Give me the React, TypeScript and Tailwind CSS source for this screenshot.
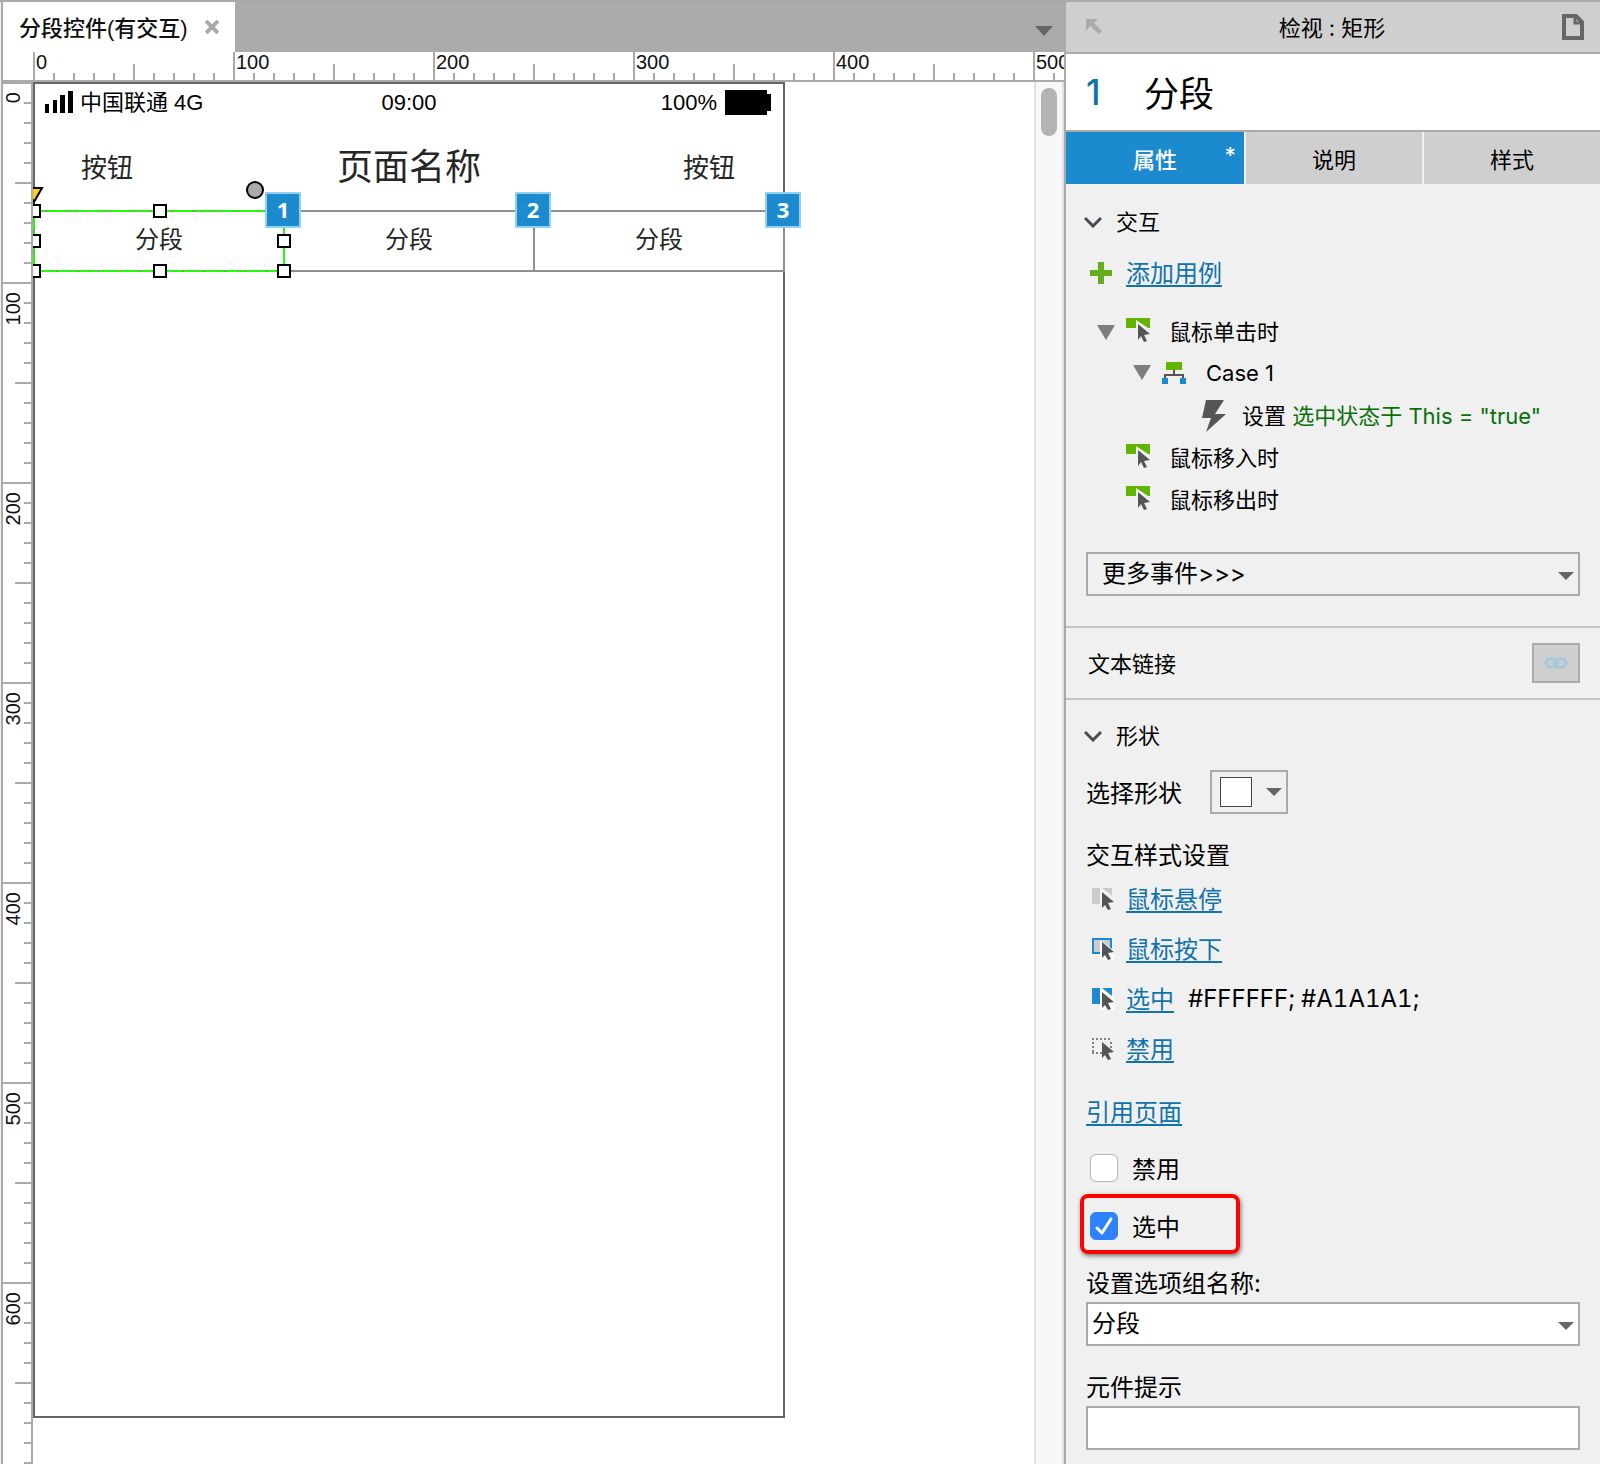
import React, { useState } from 'react';

const MAJORS_X = [0, 100, 200, 300, 400, 500];
const MAJORS_Y = [0, 100, 200, 300, 400, 500, 600];
const STEPS = [0, 1, 2, 3, 4, 5, 6, 7, 8, 9];

const HorizontalRuler = () => (
    <div className="flex h-[30px] overflow-hidden border-b-2 border-[#aaaaaa] bg-white pl-[30px]">
        {MAJORS_X.map((n) => (
            <div key={n} className="relative flex w-[200px] shrink-0 items-end">
                {STEPS.map((s) => (
                    <div
                        key={s}
                        className={`w-5 border-l-2 border-[#aaaaaa] ${s === 0 ? 'h-7' : s === 5 ? 'h-4' : 'h-[7px]'}`}
                    />
                ))}
                <span className="absolute left-[3px] top-0 text-[20px] leading-[20px]">{n}</span>
            </div>
        ))}
    </div>
);

const VerticalRuler = () => (
    <div className="h-0 min-h-full w-[30px] shrink-0 overflow-hidden border-r-2 border-[#aaaaaa] bg-white">
        {MAJORS_Y.map((n) => (
            <div key={n} className="relative flex flex-col items-end">
                {STEPS.map((s) => (
                    <div
                        key={s}
                        className={`h-5 border-t-2 border-[#aaaaaa] ${s === 0 ? 'w-7' : s === 5 ? 'w-4' : 'w-[7px]'}`}
                    />
                ))}
                <span className="absolute left-0 top-[10px] rotate-180 text-[20px] leading-[20px] [writing-mode:vertical-rl]">
                    {n}
                </span>
            </div>
        ))}
    </div>
);

const Handle = ({ className }: { className: string }) => (
    <div className={`absolute size-[14px] border-2 border-black bg-white ${className}`} />
);

const Badge = ({ n, className }: { n: number; className: string }) => (
    <div
        className={`absolute flex size-9 items-center justify-center border-2 border-[#93d2f0] bg-[#1b8ace] pb-[2px] font-['Open_Sans'] text-[22px] font-bold leading-none text-white ${className}`}
    >
        {n}
    </div>
);

const Segment = ({ className }: { className?: string }) => (
    <div className={`flex h-[62px] flex-1 items-center justify-center border-2 border-[#8f8f8f] pb-[2px] text-[24px] ${className ?? ''}`}>
        分段
    </div>
);

const Artboard = () => (
    <div className="relative h-[1336px] w-[752px] text-[#262626]">
        <div className="absolute inset-0 border-2 border-[#666666]" />

        {/* Status bar */}
        <div className="grid h-10 grid-cols-3 items-center px-3 text-[22px] leading-[30px] text-black">
            <div className="flex items-center gap-[7px]">
                <svg width="28" height="22" viewBox="0 0 28 22" fill="black">
                    <rect x="0" y="13" width="4" height="9" />
                    <rect x="8" y="9" width="4" height="13" />
                    <rect x="15" y="4" width="5" height="18" />
                    <rect x="23" y="0" width="5" height="22" />
                </svg>
                <span className="pt-[2px]">中国联通 4G</span>
            </div>
            <span className="pt-[2px] text-center">09:00</span>
            <div className="flex items-center justify-end gap-2">
                <span className="pt-[2px]">100%</span>
                <svg width="48" height="25" viewBox="0 0 48 25" fill="black">
                    <rect width="42" height="25" />
                    <rect x="42" y="4" width="4" height="17" />
                </svg>
            </div>
        </div>

        {/* Navigation bar */}
        <div className="grid h-[88px] grid-cols-3 items-center px-12 pt-[3px]">
            <span className="text-[26px] leading-[36px]">按钮</span>
            <span className="text-center text-[36px] leading-[48px]">页面名称</span>
            <span className="pr-[2px] text-right text-[26px] leading-[36px]">按钮</span>
        </div>

        {/* Segments share their side borders */}
        <div className="relative flex">
            <Segment />
            <Segment className="-ml-[2px]" />
            <Segment className="-ml-[2px]" />

            <svg className="absolute left-0 top-0" width="252" height="62" viewBox="0 0 252 62" fill="none">
                <rect x="1" y="1" width="250" height="60" stroke="#1eff00" strokeWidth="2" strokeDasharray="11 2 7 1" />
            </svg>
            <svg className="absolute -left-2 -top-6" width="20" height="18" viewBox="0 0 20 18">
                <path d="M1 2H17L9 16Z" fill="#ffd21a" stroke="black" strokeWidth="2" />
            </svg>
            <div className="absolute -top-[29px] left-[213px] size-[18px] rounded-full border-2 border-black bg-[#aaaaaa]" />
            <Handle className="-left-[6px] -top-[6px]" />
            <Handle className="-left-[6px] top-6" />
            <Handle className="-bottom-[6px] -left-[6px]" />
            <Handle className="-top-[6px] left-[120px]" />
            <Handle className="-bottom-[6px] left-[120px]" />
            <Handle className="left-[244px] top-6" />
            <Handle className="-bottom-[6px] left-[244px]" />
            <Badge n={1} className="-top-[18px] left-[232px]" />
            <Badge n={2} className="-top-[18px] left-[482px]" />
            <Badge n={3} className="-top-[18px] left-[732px]" />
        </div>
    </div>
);

const Arrow = ({ className }: { className?: string }) => (
    <svg className={className} width="16" height="8" viewBox="0 0 16 8" fill="#666666">
        <path d="M0 0H16L8 8Z" />
    </svg>
);

const TreeArrow = () => (
    <svg width="18" height="15" viewBox="0 0 18 15" fill="#7d7d7d">
        <path d="M0 0H18L9 15Z" />
    </svg>
);

const EventIcon = () => (
    <svg className="-mt-1" width="24" height="24" viewBox="0 0 24 24">
        <path d="M0 0H24V10H0Z" fill="#62b400" />
        <path d="M10 2L22 10H10Z" fill="#f6f6f6" />
        <path d="M12 6V22L15 18L18 24L21 23L18 17L24 16Z" fill="#555555" />
    </svg>
);

const CaseIcon = () => (
    <svg width="24" height="22" viewBox="0 0 24 22">
        <rect x="4" width="16" height="8" fill="#62b400" />
        <path d="M12 8V13M3 16V13H21V16" fill="none" stroke="#555555" strokeWidth="2" />
        <rect y="16" width="6" height="6" fill="#1b8ace" />
        <rect x="18" y="16" width="6" height="6" fill="#1b8ace" />
    </svg>
);

const BoltIcon = () => (
    <svg width="24" height="32" viewBox="0 0 24 32" fill="#555555">
        <path d="M4 0H22L13 14H24L4 32L9 18H0Z" />
    </svg>
);

type Kind = 'hover' | 'down' | 'selected' | 'disabled';

const StateIcon = ({ kind }: { kind: Kind }) => (
    <svg width="22" height="22" viewBox="0 0 22 22">
        {kind === 'hover' && (
            <>
                <path d="M0 0H20V16H0Z" fill="#cccccc" />
                <path d="M8 0H10L20 8V16H8Z" fill="#f4f4f4" />
            </>
        )}
        {kind === 'down' && (
            <>
                <path d="M1 1H19V15H1Z" fill="#cccccc" stroke="#1b8ace" strokeWidth="2" />
                <path d="M8 2L20 11L22 12V22H8Z" fill="white" />
            </>
        )}
        {kind === 'selected' && (
            <>
                <path d="M0 0H20V16H0Z" fill="#1b8ace" />
                <path d="M8 0H10L20 8L22 10V22H8Z" fill="white" />
            </>
        )}
        {kind === 'disabled' && (
            <path d="M0 1H20M0 15H10M1 4V14M19 4V10" fill="none" stroke="#808080" strokeWidth="2" strokeDasharray="2 2" />
        )}
        <path d="M10 4V20L13 17L16 22L19 21L16 15L22 14Z" fill="#555555" />
    </svg>
);

const SectionTitle = ({ children }: { children: React.ReactNode }) => (
    <button type="button" className="flex h-9 items-center gap-[14px] pl-[18px] text-[22px] leading-[30px]">
        <svg width="18" height="12" viewBox="0 0 18 12" fill="none" stroke="#4a4a50" strokeWidth="3">
            <path d="M1 2L9 10L17 2" />
        </svg>
        {children}
    </button>
);

const Link = ({ children }: { children: React.ReactNode }) => (
    <a href="#" className="border-b-2 border-[#1173ae] pt-1 text-[24px] leading-[22px] text-[#1173ae]">
        {children}
    </a>
);

const STATES: { kind: Kind; label: string; value?: string }[] = [
    { kind: 'hover', label: '鼠标悬停' },
    { kind: 'down', label: '鼠标按下' },
    { kind: 'selected', label: '选中', value: '#FFFFFF; #A1A1A1;' },
    { kind: 'disabled', label: '禁用' },
];

const Inspector = () => {
    const [disabled, setDisabled] = useState(false);
    const [selected, setSelected] = useState(true);
    const [tooltip, setTooltip] = useState('');
    const [name, setName] = useState('分段');

    return (
        <aside className="flex w-[536px] shrink-0 flex-col border-l-2 border-[#aaaaaa] bg-[#f0f0f0] font-['Inter','Noto_Sans_CJK_SC',sans-serif] text-[22px] text-black">
            <header className="flex h-[52px] items-center justify-between border-b-2 border-[#aaaaaa] bg-[#cfcfcf] pl-5 pr-4">
                <svg width="16" height="16" viewBox="0 0 16 16" fill="#ababab">
                    <path d="M0 0H12L8 4L16 12L13 15L4 7L0 12Z" />
                </svg>
                <h2 className="pt-[2px] leading-[30px]">检视 : 矩形</h2>
                <svg width="22" height="26" viewBox="0 0 22 26" fill="none" stroke="#666666" strokeWidth="4">
                    <path d="M2 2H14L20 8V24H2Z" />
                    <path d="M13 2V9H20" strokeWidth="3" />
                </svg>
            </header>

            <div className="flex h-[78px] items-center border-b-2 border-[#aaaaaa] bg-white pl-5 text-[35px]">
                <span className="w-[58px] font-medium text-[#1173ae]">1</span>
                <input
                    aria-label="元件名称"
                    value={name}
                    onChange={(e) => setName(e.target.value)}
                    className="min-w-0 flex-1 bg-transparent pt-1 outline-none"
                />
            </div>

            <div className="grid h-[52px] grid-cols-[178px_1fr_1fr] gap-[2px]">
                <button type="button" className="relative bg-[#1b8ace] pt-1 font-medium text-white">
                    属性
                    <span className="absolute right-2 top-2 leading-[30px]">*</span>
                </button>
                <button type="button" className="bg-[#cfcfcf] pt-1">说明</button>
                <button type="button" className="bg-[#cfcfcf] pt-1">样式</button>
            </div>

            {/* Interactions */}
            <section className="border-b-2 border-[#c4c4c4] pb-[30px] pt-5">
                <SectionTitle>交互</SectionTitle>
                <div className="mt-3 flex h-[42px] items-center gap-[14px] pl-6">
                    <svg width="22" height="22" viewBox="0 0 22 22" fill="#66ad1e">
                        <path d="M8 0H14V8H22V14H14V22H8V14H0V8H8Z" />
                    </svg>
                    <Link>添加用例</Link>
                </div>
                <ul className="mt-[17px] leading-[30px]">
                    <li className="flex h-[42px] items-center pl-[31px]">
                        <TreeArrow />
                        <span className="ml-[11px] w-[43px]"><EventIcon /></span>
                        鼠标单击时
                    </li>
                    <li className="flex h-[42px] items-center pb-[3px] pl-[67px]">
                        <TreeArrow />
                        <span className="ml-[11px] w-11"><CaseIcon /></span>
                        Case 1
                    </li>
                    <li className="flex h-[42px] items-center pl-[136px]">
                        <span className="w-10"><BoltIcon /></span>
                        <span>设置 <span className="text-[#0a700a]">选中状态于 This = "true"</span></span>
                    </li>
                    <li className="flex h-[42px] items-center pl-[60px]">
                        <span className="w-[43px]"><EventIcon /></span>
                        鼠标移入时
                    </li>
                    <li className="flex h-[42px] items-center pl-[60px]">
                        <span className="w-[43px]"><EventIcon /></span>
                        鼠标移出时
                    </li>
                </ul>
                <div className="relative mx-5 mt-[31px]">
                    <select aria-label="更多事件" className="block h-11 w-full appearance-none border-2 border-[#aaaaaa] bg-transparent pl-[14px] text-[24px] leading-[30px]">
                        <option>更多事件&gt;&gt;&gt;</option>
                    </select>
                    <Arrow className="pointer-events-none absolute right-[6px] top-5" />
                </div>
            </section>

            {/* Text link */}
            <section className="flex h-[72px] items-center justify-between border-b-2 border-[#c4c4c4] pl-[22px] pr-5">
                <span className="pt-[2px]">文本链接</span>
                <button type="button" aria-label="文本链接" className="flex h-10 w-12 items-center justify-center border-2 border-[#aaaaaa] bg-[#cfcfcf]">
                    <svg width="24" height="12" viewBox="0 0 24 12" fill="none" stroke="#a5c8dc" strokeWidth="3">
                        <path d="M9 10H6A4 4 0 0 1 6 2H11A3 3 0 0 1 13 7L12 8" />
                        <path d="M15 2H18A4 4 0 0 1 18 10H13A3 3 0 0 1 11 5L12 4" />
                    </svg>
                </button>
            </section>

            {/* Shape */}
            <section className="pb-[14px] pt-[18px] text-[24px] leading-[30px]">
                <SectionTitle>形状</SectionTitle>
                <div className="mt-4 flex h-11 items-center pl-5">
                    <span className="w-[124px] pt-[3px]">选择形状</span>
                    <button type="button" aria-label="选择形状" className="flex h-11 w-[78px] items-center justify-between border-2 border-[#aaaaaa] pl-2 pr-1">
                        <span className="h-[30px] w-8 border border-[#444444] bg-white" />
                        <Arrow />
                    </button>
                </div>
                <h3 className="mt-5 flex h-10 items-center pl-5 pt-1">交互样式设置</h3>
                <ul>
                    {STATES.map((s) => (
                        <li key={s.label} className="flex h-[50px] items-center pl-[26px]">
                            <StateIcon kind={s.kind} />
                            <span className="ml-3 flex items-center gap-[14px]">
                                <Link>{s.label}</Link>
                                {s.value && <span className="tabular-nums">{s.value}</span>}
                            </span>
                        </li>
                    ))}
                </ul>
                <div className="mt-[18px] flex h-10 items-center pl-5">
                    <Link>引用页面</Link>
                </div>

                <label className="mt-[2px] flex h-[60px] items-center gap-[14px] pl-6 pt-2">
                    <input
                        type="checkbox"
                        checked={disabled}
                        onChange={(e) => setDisabled(e.target.checked)}
                        className="size-7 appearance-none rounded-md border border-[#b5b5b5] bg-white checked:bg-[#2f82fb]"
                    />
                    <span className="pt-[3px]">禁用</span>
                </label>
                <label className="ml-[14px] flex h-[60px] w-[160px] items-center gap-[14px] rounded-lg border-4 border-[#ff0000] pl-[6px] pt-1 shadow-[1px_2px_4px_rgba(0,0,0,0.5)]">
                    <span className="relative flex">
                        <input
                            type="checkbox"
                            checked={selected}
                            onChange={(e) => setSelected(e.target.checked)}
                            className="size-7 appearance-none rounded-md border border-[#b5b5b5] bg-white checked:border-[#2f82fb] checked:bg-[#2f82fb]"
                        />
                        {selected && (
                            <svg className="pointer-events-none absolute inset-0" width="28" height="28" viewBox="0 0 28 28" fill="none" stroke="white" strokeWidth="3" strokeLinecap="round" strokeLinejoin="round">
                                <path d="M7 16L12 21L21 7" />
                            </svg>
                        )}
                    </span>
                    <span className="pt-[3px]">选中</span>
                </label>

                <div className="mt-2 px-5">
                    <label htmlFor="group" className="flex h-10 items-center pt-1">设置选项组名称:</label>
                    <div className="relative">
                        <select id="group" className="block h-11 w-full appearance-none border-2 border-[#aaaaaa] bg-white pl-1 leading-[30px]">
                            <option>分段</option>
                        </select>
                        <Arrow className="pointer-events-none absolute right-[6px] top-5" />
                    </div>
                </div>
                <div className="mt-5 px-5">
                    <label htmlFor="tooltip" className="flex h-10 items-center pt-1">元件提示</label>
                    <input
                        id="tooltip"
                        type="text"
                        value={tooltip}
                        onChange={(e) => setTooltip(e.target.value)}
                        className="block h-11 w-full border-2 border-[#aaaaaa] bg-white px-1"
                    />
                </div>
            </section>
        </aside>
    );
};

export default function App() {
    return (
        <div className="flex min-h-screen border-t-2 border-[#aaaaaa] bg-[#f0f0f0] pl-px font-['Liberation_Sans','Noto_Sans_CJK_SC',sans-serif] text-[#111111]">
            <main className="flex min-w-0 flex-1 flex-col border-l-2 border-[#aaaaaa] bg-white">
                <div className="flex h-[50px] items-center justify-between bg-[#ababab] pr-[11px]">
                    <div className="flex h-full items-center gap-[17px] bg-white px-4 text-[22px] font-medium">
                        <span className="pt-[2px]">分段控件(有交互)</span>
                        <button type="button" aria-label="关闭">
                            <svg width="14" height="14" viewBox="0 0 14 14" fill="none" stroke="#aaaaaa" strokeWidth="4">
                                <path d="M1 1L13 13M13 1L1 13" />
                            </svg>
                        </button>
                    </div>
                    <button type="button" aria-label="所有页面" className="mt-2">
                        <svg width="18" height="10" viewBox="0 0 18 10" fill="#666666">
                            <path d="M0 0H18L9 10Z" />
                        </svg>
                    </button>
                </div>
                <HorizontalRuler />
                <div className="flex flex-1">
                    <VerticalRuler />
                    <div className="min-w-0 flex-1 overflow-hidden pb-11">
                        <Artboard />
                    </div>
                    <div className="flex w-[30px] shrink-0 justify-center border-x-2 border-[#e2e2e2] bg-[#f8f8f8] pt-[6px]">
                        <div className="h-12 w-4 rounded-full bg-[#b3b3b3]" />
                    </div>
                </div>
            </main>
            <Inspector />
        </div>
    );
}
